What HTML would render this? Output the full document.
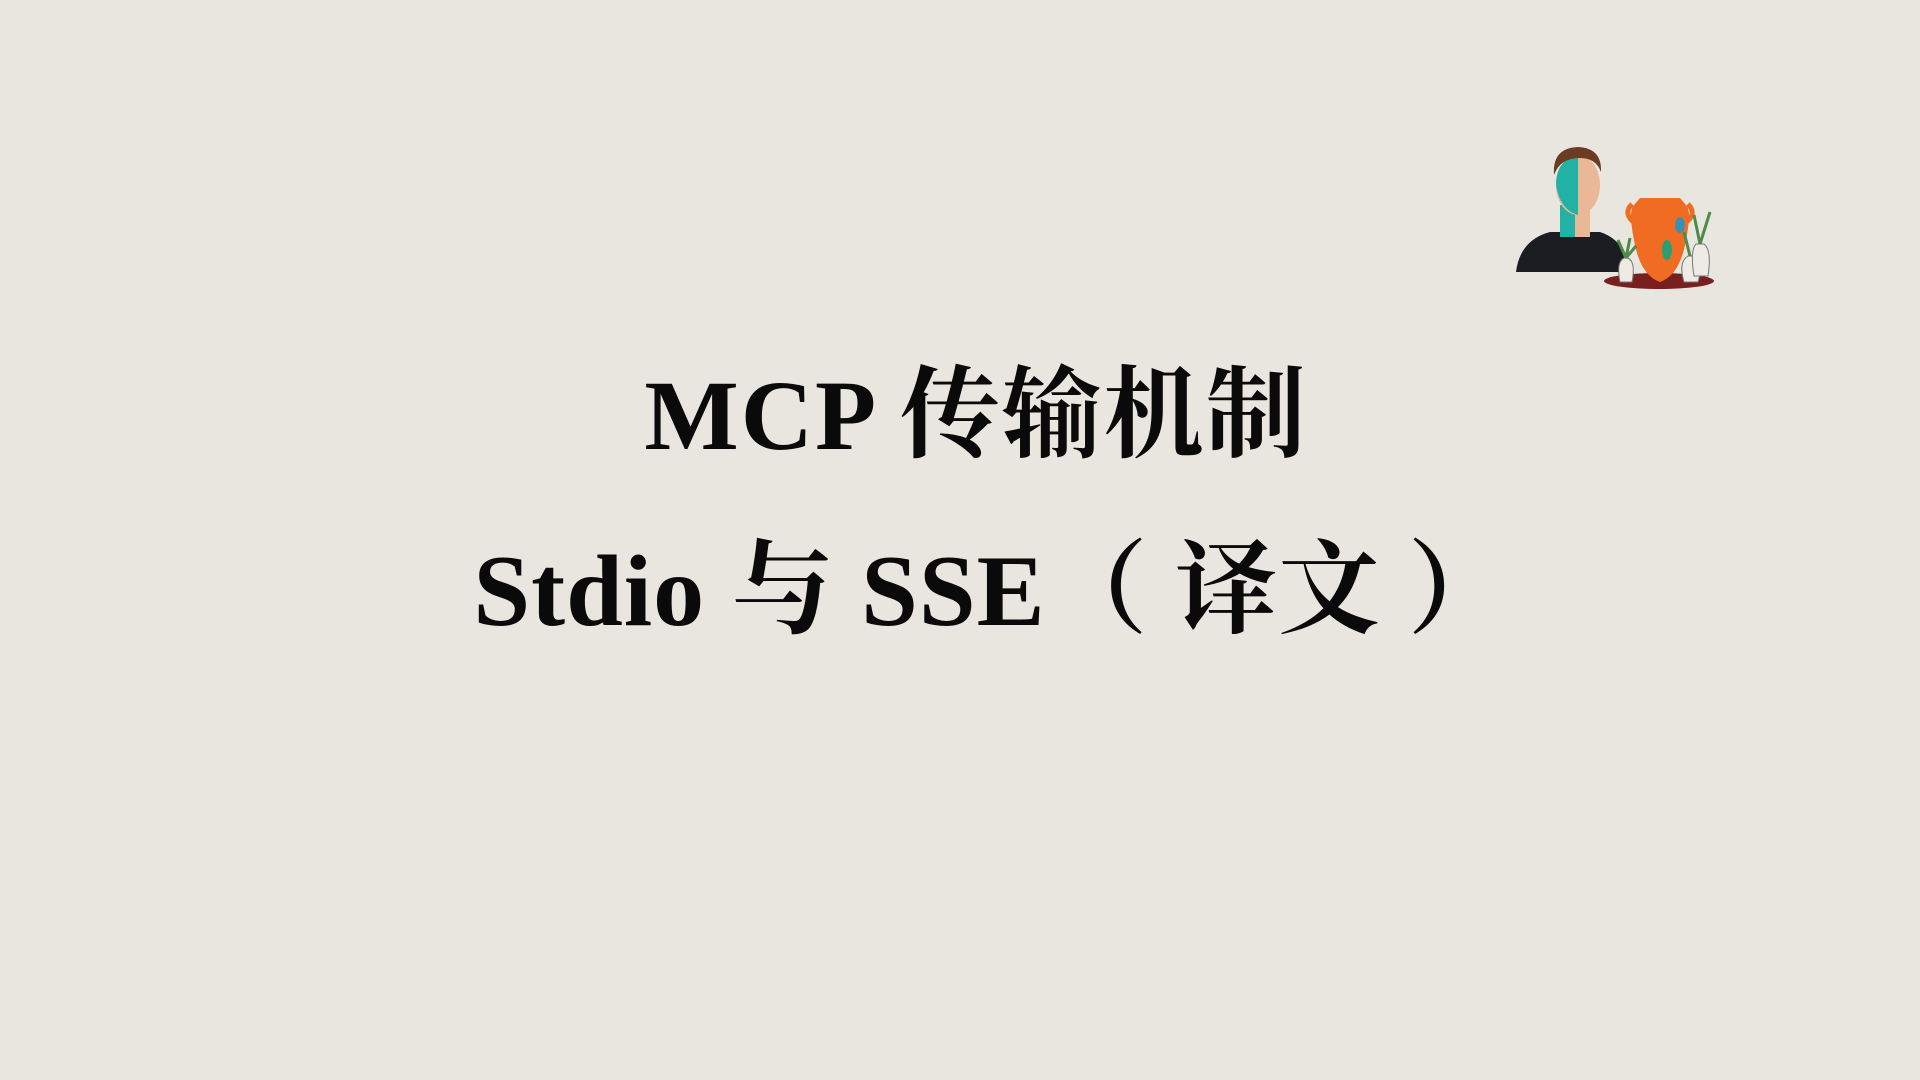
<!DOCTYPE html>
<html><head><meta charset="utf-8"><style>
html,body{margin:0;padding:0}
body{width:1920px;height:1080px;background:#e9e6e0;position:relative;overflow:hidden;}
.t{position:absolute;left:0;width:1920px;text-align:center;font-family:"Liberation Serif","Noto Serif CJK SC",serif;font-weight:bold;color:#0a0a0a;white-space:nowrap}
#l1{top:366px;left:16px;font-size:100px;line-height:100px;letter-spacing:2px}
#l2{top:541px;left:32px;font-size:102px;line-height:102px;letter-spacing:1px}
</style></head><body>
<div class="t" id="l1">MCP 传输机制</div>
<div class="t" id="l2">Stdio 与 SSE（ 译文 ）</div>
<svg style="position:absolute;left:0;top:0" width="1920" height="1080">
<ellipse cx="1659" cy="281" rx="55" ry="8" fill="#7a1f1f"/>
<path d="M1516 272 Q1520 240 1550 232 L1600 232 Q1625 240 1632 272 Z" fill="#1c1d22"/>
<rect x="1560" y="205" width="30" height="32" fill="#e9b896"/>
<rect x="1560" y="205" width="15" height="32" fill="#21b2a5"/>
<ellipse cx="1578" cy="185" rx="22" ry="30" fill="#eab896"/>
<path d="M1556 185 Q1556 160 1578 155 L1578 215 Q1560 210 1556 185Z" fill="#21b2a5"/>
<path d="M1554 175 Q1552 148 1578 147 Q1602 148 1601 172 Q1596 158 1580 158 Q1560 158 1554 175Z" fill="#6b3b22"/>
<path d="M1634 205 Q1628 210 1634 240 Q1640 275 1660 282 Q1680 275 1686 240 Q1692 210 1686 205 L1680 198 L1640 198 Z" fill="#ef6c22"/>
<path d="M1632 204 Q1622 214 1636 224 M1688 204 Q1698 214 1684 224" stroke="#ef6c22" stroke-width="5" fill="none"/>
<ellipse cx="1667" cy="250" rx="5" ry="10" fill="#2a9f72"/>
<ellipse cx="1680" cy="225" rx="5" ry="8" fill="#3a8fb5"/>
<path d="M1620 282 Q1616 262 1624 258 L1628 258 Q1636 262 1632 282Z" fill="#eeeae4" stroke="#777" stroke-width="1"/>
<path d="M1684 282 Q1678 262 1688 256 L1694 256 Q1704 262 1698 282Z" fill="#eeeae4" stroke="#777" stroke-width="1"/>
<path d="M1694 276 Q1690 250 1696 244 L1704 244 Q1712 250 1708 276Z" fill="#eeeae4" stroke="#777" stroke-width="1"/>
<path d="M1626 258 L1618 240 M1626 258 L1630 238 M1626 258 L1636 246" stroke="#4e8a4a" stroke-width="3"/>
<path d="M1700 244 L1694 215 M1700 244 L1710 212 M1690 256 L1684 232" stroke="#4e8a4a" stroke-width="3"/>
</svg>
</body></html>
